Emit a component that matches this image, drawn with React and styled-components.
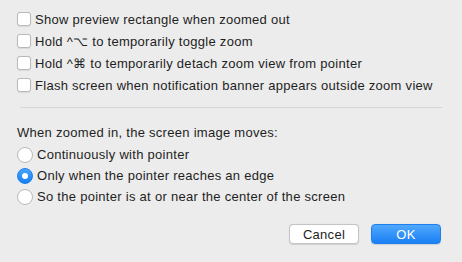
import React, { useState } from 'react';
import styled, { createGlobalStyle } from 'styled-components';

const GlobalStyle = createGlobalStyle`
  html, body {
    margin: 0;
    padding: 0;
    background: #ececec;
  }
  body {
    font-family: "Liberation Sans", Arial, sans-serif;
    font-size: 13px;
    letter-spacing: 0.28px;
    color: #1e1e1e;
  }
`;

const Sheet = styled.div`
  width: 462px;
  height: 262px;
  box-sizing: border-box;
  padding: 8px 0 0 17px;
  display: flex;
  flex-direction: column;
  background: #ececec;
`;

const CheckList = styled.div`
  display: flex;
  flex-direction: column;
`;

const Row = styled.label`
  display: flex;
  align-items: center;
  gap: ${p => p.$gap}px;
  height: ${p => p.$h}px;
  white-space: nowrap;
  cursor: default;
`;

const Box = styled.span`
  width: 14px;
  height: 14px;
  box-sizing: border-box;
  border: 1px solid #b9b9b9;
  border-radius: 3px;
  background: #fff;
  box-shadow: 0 0.5px 1px rgba(0, 0, 0, 0.08);
  flex: none;
`;

const Separator = styled.div`
  height: 1px;
  background: #d6d6d6;
  margin: 11px 20px 17px 3px;
`;

const Heading = styled.div`
  line-height: 16px;
  margin-bottom: 3px;
`;

const Radio = styled.span`
  width: 16px;
  height: 16px;
  box-sizing: border-box;
  border-radius: 50%;
  flex: none;
  display: flex;
  align-items: center;
  justify-content: center;
  border: 1px solid ${p => (p.$on ? '#1a7ff0' : '#b9b9b9')};
  background: ${p => (p.$on ? 'linear-gradient(#4aa3fb, #1680f4)' : '#fff')};
  &::after {
    content: '';
    width: 6px;
    height: 6px;
    border-radius: 50%;
    background: #fff;
    display: ${p => (p.$on ? 'block' : 'none')};
  }
`;

const Buttons = styled.div`
  display: flex;
  justify-content: flex-end;
  gap: 12px;
  margin-top: 17px;
  padding-right: 21px;
`;

const Button = styled.button`
  width: 70px;
  height: 20px;
  box-sizing: border-box;
  border-radius: 4px;
  font-family: "Liberation Sans", Arial, sans-serif;
  font-size: 13px;
  letter-spacing: 0.28px;
  padding: 0;
  border: 1px solid ${p => (p.$primary ? '#1e7ff0' : '#c4c4c4')};
  background: ${p => (p.$primary ? 'linear-gradient(#51a8fc, #1a80f5)' : '#fff')};
  color: ${p => (p.$primary ? '#fff' : '#1e1e1e')};
  box-shadow: 0 0.5px 1px rgba(0, 0, 0, 0.12);
`;

const checks = [
  'Show preview rectangle when zoomed out',
  'Hold ^\u2325 to temporarily toggle zoom',
  'Hold ^\u2318 to temporarily detach zoom view from pointer',
  'Flash screen when notification banner appears outside zoom view',
];

const moves = [
  'Continuously with pointer',
  'Only when the pointer reaches an edge',
  'So the pointer is at or near the center of the screen',
];

export default function App() {
  const [mode, setMode] = useState(1);
  return (
    <>
      <GlobalStyle />
      <Sheet>
        <CheckList>
          {checks.map(t => (
            <Row key={t} $h={22} $gap={4}>
              <Box />
              <span>{t}</span>
            </Row>
          ))}
        </CheckList>
        <Separator />
        <Heading>When zoomed in, the screen image moves:</Heading>
        {moves.map((t, i) => (
          <Row key={t} $h={21} $gap={4} onClick={() => setMode(i)}>
            <Radio $on={mode === i} />
            <span>{t}</span>
          </Row>
        ))}
        <Buttons>
          <Button>Cancel</Button>
          <Button $primary>OK</Button>
        </Buttons>
      </Sheet>
    </>
  );
}
